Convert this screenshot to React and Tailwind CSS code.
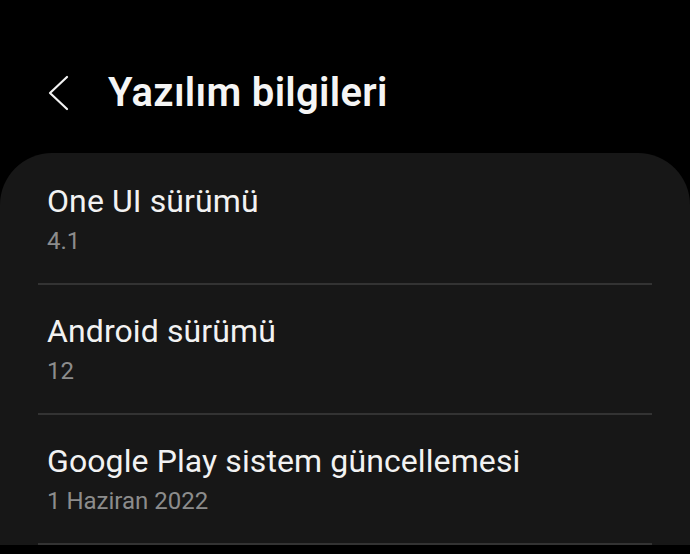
export default function App() {
  const items = [
    ["One UI sürümü", "4.1"],
    ["Android sürümü", "12"],
    ["Google Play sistem güncellemesi", "1 Haziran 2022"],
  ];
  return (
    <div className="w-[690px] h-[554px] overflow-hidden bg-black" style={{ fontFamily: "Roboto, 'Noto Sans', sans-serif" }}>
      <div className="h-[153px] flex items-center pl-[47px] pt-[32px]">
        <svg width="24" height="36" viewBox="0 0 24 36">
          <path d="M20 2 L3 18 L20 34" fill="none" stroke="#f2f2f2" strokeWidth="2.2" strokeLinecap="round" strokeLinejoin="round" />
        </svg>
        <h1 className="ml-[37px] text-[40px] font-semibold text-[#f5f5f5] tracking-[0.3px] leading-none">Yazılım bilgileri</h1>
      </div>
      <div className="bg-[#171717] rounded-t-[52px] pt-[2px]">
        {items.map(([t, s]) => (
          <div key={t} className="mx-[38px] border-b-2 border-[#333333] h-[130px] flex flex-col pl-[9px] pt-[27px]">
            <div className="text-[32px] text-[#f2f2f2] leading-[38px] tracking-[0.1px]">{t}</div>
            <div className="text-[24px] text-[#8c8c8c] leading-[30px] mt-[6px]">{s}</div>
          </div>
        ))}
      </div>
    </div>
  );
}
